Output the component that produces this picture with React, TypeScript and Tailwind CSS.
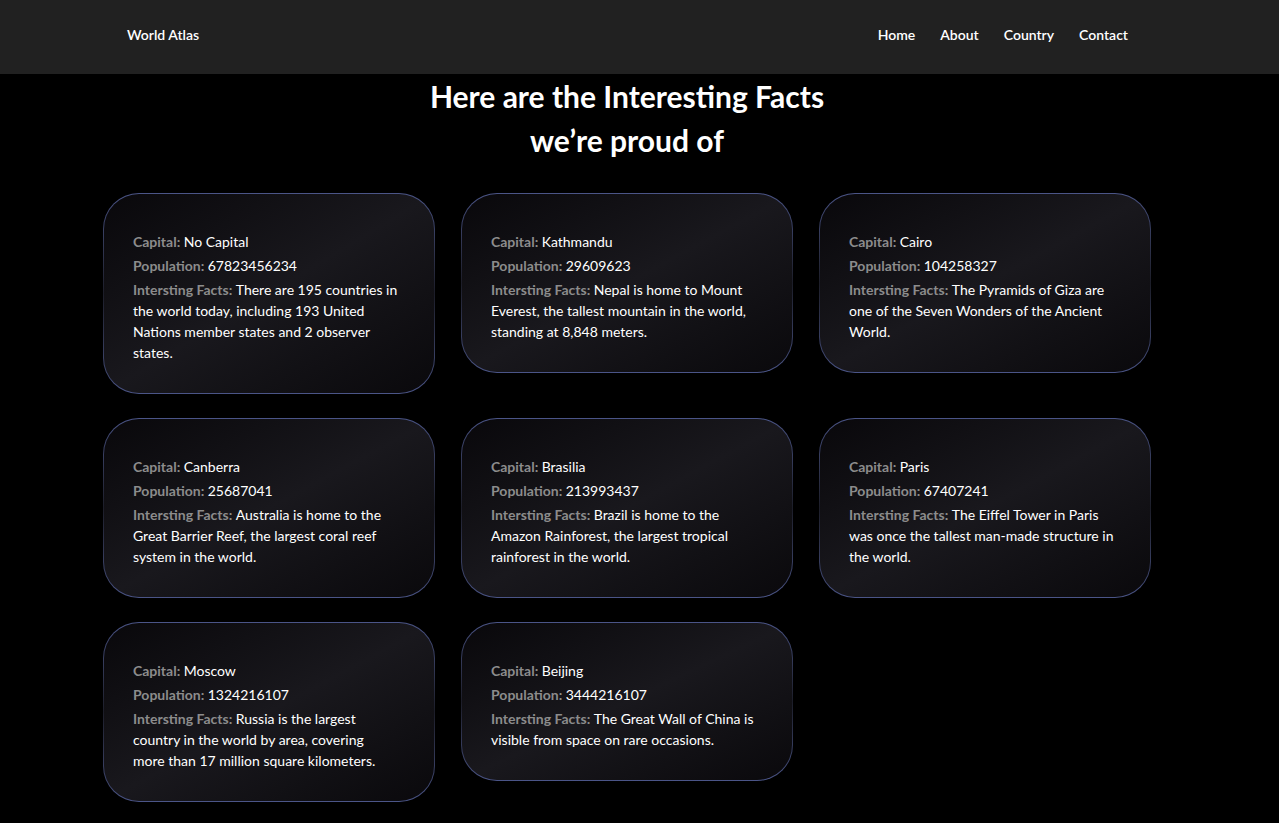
import React from "react";

type Country = {
  capital: string;
  population: string;
  fact: string;
};

const countries: Country[] = [
  {
    capital: "No Capital",
    population: "67823456234",
    fact: "There are 195 countries in the world today, including 193 United Nations member states and 2 observer states.",
  },
  {
    capital: "Kathmandu",
    population: "29609623",
    fact: "Nepal is home to Mount Everest, the tallest mountain in the world, standing at 8,848 meters.",
  },
  {
    capital: "Cairo",
    population: "104258327",
    fact: "The Pyramids of Giza are one of the Seven Wonders of the Ancient World.",
  },
  {
    capital: "Canberra",
    population: "25687041",
    fact: "Australia is home to the Great Barrier Reef, the largest coral reef system in the world.",
  },
  {
    capital: "Brasilia",
    population: "213993437",
    fact: "Brazil is home to the Amazon Rainforest, the largest tropical rainforest in the world.",
  },
  {
    capital: "Paris",
    population: "67407241",
    fact: "The Eiffel Tower in Paris was once the tallest man-made structure in the world.",
  },
  {
    capital: "Moscow",
    population: "1324216107",
    fact: "Russia is the largest country in the world by area, covering more than 17 million square kilometers.",
  },
  {
    capital: "Beijing",
    population: "3444216107",
    fact: "The Great Wall of China is visible from space on rare occasions.",
  },
];

function FactCard({ c }: { c: Country }) {
  return (
    <div className="rounded-[36px] p-px bg-linear-to-b from-[#4b5588] via-[#1c1d28] to-[#4b5588]">
      <div className="rounded-[35px] bg-linear-to-br from-[#09080b] via-[#19181d] to-[#0a090c] pt-[37px] pb-[30px] pl-[29px] pr-[36px] text-[14px] leading-[21px] text-white">
        <p className="mb-[3px]">
          <span className="font-bold text-[#8c8c8c]">Capital: </span>
          {c.capital}
        </p>
        <p className="mb-[3px]">
          <span className="font-bold text-[#8c8c8c]">Population: </span>
          {c.population}
        </p>
        <p>
          <span className="font-bold text-[#8c8c8c]">Intersting Facts: </span>
          {c.fact}
        </p>
      </div>
    </div>
  );
}

export default function App() {
  return (
    <div className="min-h-screen bg-black text-white font-['Lato','Noto_Sans',sans-serif]">
      {/* header */}
      <header className="h-[74px] bg-[#212121] shadow-[0_4px_8px_rgba(0,0,0,0.6)] flex items-center justify-between pl-[127px] pr-[151px] pb-[6px]">
        <span className="text-[14px] font-semibold">World Atlas</span>
        <nav className="flex gap-[25px] text-[14px] font-semibold">
          <a>Home</a>
          <a>About</a>
          <a>Country</a>
          <a>Contact</a>
        </nav>
      </header>

      <main className="pl-[103px] pr-[128px] pb-[40px]">
        <h1 className="text-center text-[30px] leading-[44px] font-bold">
          Here are the Interesting Facts
          <br />
          we&rsquo;re proud of
        </h1>

        <div className="mt-[31px] grid grid-cols-3 gap-x-[26px] gap-y-[24px] items-start">
          {countries.map((c) => (
            <FactCard key={c.capital} c={c} />
          ))}
        </div>
      </main>
    </div>
  );
}
